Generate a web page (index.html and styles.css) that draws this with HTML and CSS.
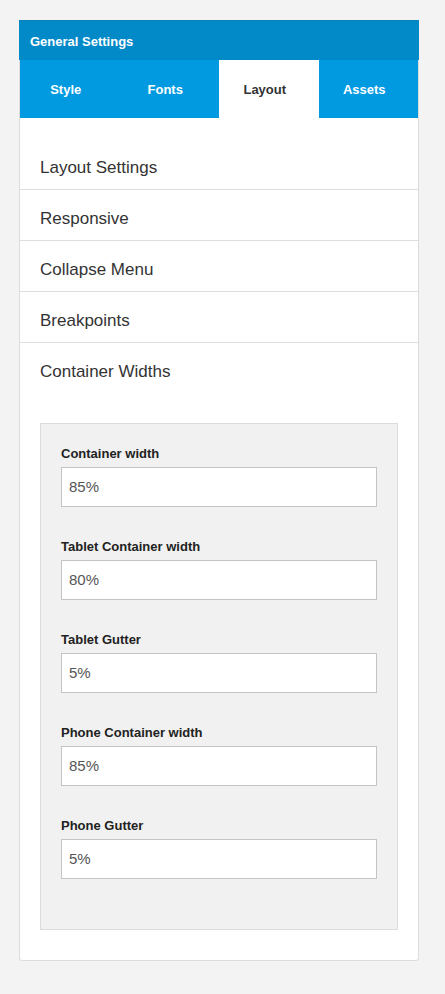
FILE: index.html
```html
<!DOCTYPE html>
<html>
<head>
<meta charset="utf-8">
<link rel="stylesheet" href="styles.css">
</head>
<body>
<div class="card">
  <div class="card-header">General Settings</div>
  <div class="tabs">
    <div class="tab">Style</div>
    <div class="tab">Fonts</div>
    <div class="tab active">Layout</div>
    <div class="tab">Assets</div>
  </div>
  <div class="list">
    <div class="item">Layout Settings</div>
    <div class="item">Responsive</div>
    <div class="item">Collapse Menu</div>
    <div class="item">Breakpoints</div>
    <div class="item last">Container Widths</div>
  </div>
  <div class="panel-wrap">
    <div class="panel">
      <div class="field">
        <label class="label">Container width</label>
        <div class="input">85%</div>
      </div>
      <div class="field">
        <label class="label">Tablet Container width</label>
        <div class="input">80%</div>
      </div>
      <div class="field">
        <label class="label">Tablet Gutter</label>
        <div class="input">5%</div>
      </div>
      <div class="field">
        <label class="label">Phone Container width</label>
        <div class="input">85%</div>
      </div>
      <div class="field">
        <label class="label">Phone Gutter</label>
        <div class="input">5%</div>
      </div>
    </div>
  </div>
</div>
</body>
</html>
```
FILE: styles.css
```css
html, body {
  margin: 0;
  padding: 0;
  background: #f3f3f3;
  font-family: "Liberation Sans", Arial, sans-serif;
}
body {
  padding: 20px 0 0 19px;
}
.card {
  width: 398px;
  background: #fff;
  border: 1px solid #dcdcdc;
  border-top: none;
  border-radius: 0 0 3px 3px;
}
.card-header {
  height: 39px;
  margin: 0 -1px;
  padding: 0 0 0 11px;
  background: #0189c8;
  color: #fff;
  font-size: 13px;
  font-weight: bold;
  line-height: 41px;
  border-top: 1px solid #0a80b8;
}
.tabs {
  display: flex;
  height: 58px;
  background: #0199e0;
}
.tab {
  flex: 1;
  text-align: center;
  color: #fff;
  font-size: 13px;
  font-weight: bold;
  line-height: 60px;
  padding-right: 8px;
}
.tab.active {
  background: #fff;
  color: #333;
}
.list {
  padding-top: 21px;
}
.item {
  height: 42px;
  padding: 8px 0 0 20px;
  line-height: 42px;
  font-size: 17px;
  color: #333;
  border-bottom: 1px solid #dedede;
}
.item.last {
  border-bottom: none;
}
.panel-wrap {
  padding: 30px 20px 30px 20px;
}
.panel {
  background: #f1f1f1;
  border: 1px solid #dcdcdc;
  padding: 22px 20px 18px 20px;
}
.field {
  margin-bottom: 32px;
}
.label {
  display: block;
  font-size: 13px;
  font-weight: bold;
  color: #222;
  line-height: 15px;
  margin-bottom: 6px;
}
.input {
  height: 38px;
  border: 1px solid #c4c4c4;
  background: #fff;
  padding: 0 0 0 7px;
  font-size: 15px;
  line-height: 38px;
  color: #555;
}
```
